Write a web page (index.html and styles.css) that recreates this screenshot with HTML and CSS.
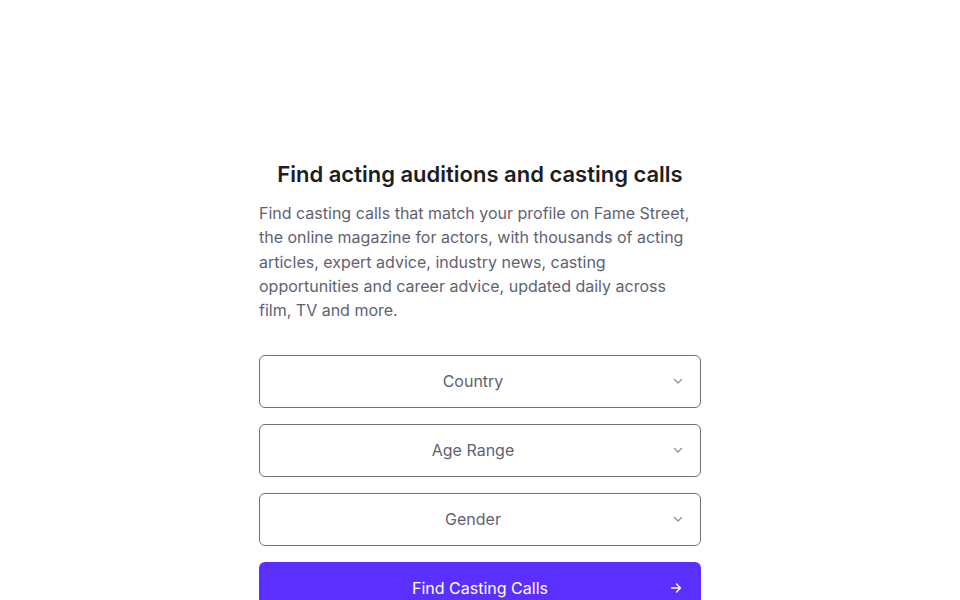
FILE: index.html
```html
<!DOCTYPE html>
<html lang="en">
<head>
<meta charset="utf-8">
<link rel="stylesheet" href="styles.css">
</head>
<body>
<main class="page">
  <section class="finder">
    <h1 class="title">Find acting auditions and casting calls</h1>
    <p class="intro">Find casting calls that match your profile on Fame Street, the online magazine for actors, with thousands of acting articles, expert advice, industry news, casting opportunities and career advice, updated daily across film, TV and more.</p>
    <form class="form">
      <div class="select">
        <span class="select-label">Country</span>
        <svg class="chev" width="14" height="14" viewBox="0 0 14 14"><path d="M3.5 5.5 7 9 10.5 5.5" fill="none" stroke="currentColor" stroke-width="1.2" stroke-linecap="round" stroke-linejoin="round"/></svg>
      </div>
      <div class="select">
        <span class="select-label">Age Range</span>
        <svg class="chev" width="14" height="14" viewBox="0 0 14 14"><path d="M3.5 5.5 7 9 10.5 5.5" fill="none" stroke="currentColor" stroke-width="1.2" stroke-linecap="round" stroke-linejoin="round"/></svg>
      </div>
      <div class="select">
        <span class="select-label">Gender</span>
        <svg class="chev" width="14" height="14" viewBox="0 0 14 14"><path d="M3.5 5.5 7 9 10.5 5.5" fill="none" stroke="currentColor" stroke-width="1.2" stroke-linecap="round" stroke-linejoin="round"/></svg>
      </div>
      <button type="button" class="btn">
        <span class="btn-label">Find Casting Calls</span>
        <svg class="arrow" width="14" height="14" viewBox="0 0 14 14"><path d="M2.5 7h9M7.5 3l4 4-4 4" fill="none" stroke="currentColor" stroke-width="1.4" stroke-linecap="round" stroke-linejoin="round"/></svg>
      </button>
    </form>
  </section>
</main>
</body>
</html>
```
FILE: styles.css
```css
* { box-sizing: border-box; }
html, body { margin: 0; padding: 0; background: #ffffff; }
body { font-family: Inter, "Noto Sans", "Liberation Sans", sans-serif; color: #1f2024; }
.page { display: flex; justify-content: center; padding-top: 160px; }
.finder { width: 442px; }
.title {
  margin: 0;
  font-size: 22px;
  line-height: 28px;
  font-weight: 600;
  text-align: center;
  color: #1d1e22;
  letter-spacing: 0;
}
.intro {
  margin: 13px 0 0;
  font-size: 16px;
  line-height: 24.25px;
  color: #5f6272;
}
.form { display: flex; flex-direction: column; gap: 16px; margin-top: 33px; }
.select {
  position: relative;
  height: 53px;
  border: 1px solid #6e7079;
  border-radius: 6px;
  display: flex;
  align-items: center;
  justify-content: center;
  padding: 0 30px 2px 16px;
  color: #5f6272;
  font-size: 16px;
}
.chev { position: absolute; right: 15px; top: 50%; margin-top: -8px; color: #8a8c96; }
.btn {
  position: relative;
  height: 53px;
  border: 0;
  border-radius: 6px;
  background: #5b2ffd;
  color: #ffffff;
  font-family: inherit;
  font-size: 16px;
  display: flex;
  align-items: center;
  justify-content: center;
  padding: 0 16px 2px;
}
.arrow { position: absolute; right: 18px; top: 50%; margin-top: -8px; }
```
